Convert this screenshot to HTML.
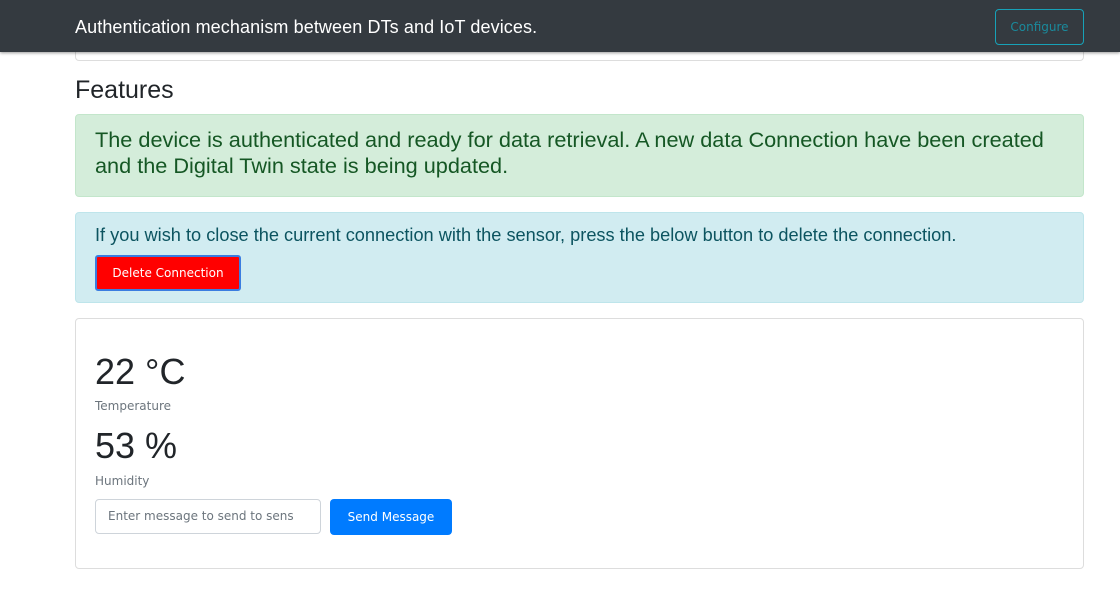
<!DOCTYPE html>
<html><head><meta charset="utf-8"><style>
*{box-sizing:border-box;margin:0;padding:0}
body{width:1120px;height:612px;overflow:hidden;background:#fff;font-family:"Liberation Sans",sans-serif;position:relative}
.sm{font-family:"DejaVu Sans",sans-serif;font-size:12px}
.topcard{position:absolute;left:75px;top:0;width:1009px;height:61px;border:1px solid #ddd;border-top:none;border-radius:0 0 4px 4px}
.nav{position:absolute;left:0;top:0;width:1120px;height:52px;background:#343a40;box-shadow:0 1px 3px rgba(0,0,0,.4)}
.nav .t{position:absolute;left:75px;top:17px;color:#fff;font-size:18px;letter-spacing:0.1px;white-space:nowrap}
.nav .b{position:absolute;left:995px;top:9px;width:89px;height:36px;border:1px solid #17a2b8;border-radius:4px;color:#1a8a9c;text-align:center;line-height:34px}
h4{position:absolute;left:75px;top:76px;font-size:25px;font-weight:400;color:#212529}
.ok{position:absolute;left:75px;top:114px;width:1009px;height:83px;background:#d4edda;border:1px solid #c3e6cb;border-radius:4px;color:#155724;font-size:21.7px;line-height:26px;padding:12px 19px}
.info{position:absolute;left:75px;top:212px;width:1009px;height:91px;background:#d1ecf1;border:1px solid #bee5eb;border-radius:4px;color:#0c5460;font-size:18.2px;padding:12px 19px;white-space:nowrap}
.del{position:absolute;left:19px;top:42px;width:146px;height:36px;background:#f00;border:2px solid #3b7de0;border-radius:3px;color:#fff;text-align:center;line-height:32px}
.card{position:absolute;left:75px;top:318px;width:1009px;height:251px;border:1px solid #ddd;border-radius:4px}
.v{position:absolute;left:19px;font-size:36px;color:#212529}
.l{position:absolute;left:19px;color:#6c757d}
.in{position:absolute;left:19px;top:180px;width:226px;height:35px;border:1px solid #ced4da;border-radius:4px;color:#6c757d;line-height:33px;padding-left:12px;white-space:nowrap;overflow:hidden}
.send{position:absolute;left:254px;top:180px;width:122px;height:36px;background:#007bff;border-radius:4px;color:#fff;text-align:center;line-height:36px}
</style></head><body>
<div class="topcard"></div>
<div class="nav"><div class="t">Authentication mechanism between DTs and IoT devices.</div><div class="b sm">Configure</div></div>
<h4>Features</h4>
<div class="ok">The device is authenticated and ready for data retrieval. A new data Connection have been created and the Digital Twin state is being updated.</div>
<div class="info">If you wish to close the current connection with the sensor, press the below button to delete the connection.<div class="del sm">Delete Connection</div></div>
<div class="card">
<div class="v" style="top:32px">22 °C</div>
<div class="l sm" style="top:80px">Temperature</div>
<div class="v" style="top:106px">53 %</div>
<div class="l sm" style="top:155px">Humidity</div>
<div class="in sm">Enter message to send to sens</div>
<div class="send sm">Send Message</div>
</div>
</body></html>
